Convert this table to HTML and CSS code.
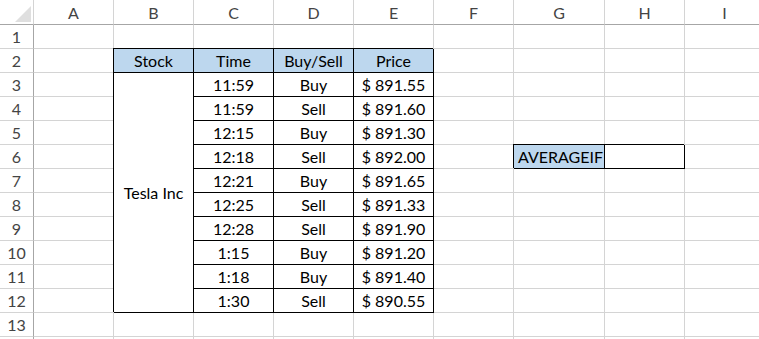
FILE: index.html
```html
<!DOCTYPE html>
<html>
<head>
<meta charset="utf-8">
<link rel="stylesheet" href="styles.css">
</head>
<body>
<div class="sheet">
  <div class="c corner"><span class="tri"></span></div>
  <div class="c hd">A</div><div class="c hd">B</div><div class="c hd">C</div><div class="c hd">D</div><div class="c hd">E</div><div class="c hd">F</div><div class="c hd">G</div><div class="c hd">H</div><div class="c hd">I</div>

  <div class="c rn">1</div>
  <div class="c"></div><div class="c"></div><div class="c"></div><div class="c"></div><div class="c"></div><div class="c"></div><div class="c"></div><div class="c"></div><div class="c"></div>

  <div class="c rn">2</div>
  <div class="c"></div>
  <div class="c t blue">Stock</div><div class="c t blue">Time</div><div class="c t blue">Buy/Sell</div><div class="c t blue">Price</div>
  <div class="c"></div><div class="c"></div><div class="c"></div><div class="c"></div>

  <div class="c rn">3</div>
  <div class="c"></div>
  <div class="c t merged">Tesla Inc</div>
  <div class="c t">11:59</div><div class="c t">Buy</div><div class="c t">$ 891.55</div>
  <div class="c"></div><div class="c"></div><div class="c"></div><div class="c"></div>

  <div class="c rn">4</div>
  <div class="c"></div>
  <div class="c t">11:59</div><div class="c t">Sell</div><div class="c t">$ 891.60</div>
  <div class="c"></div><div class="c"></div><div class="c"></div><div class="c"></div>

  <div class="c rn">5</div>
  <div class="c"></div>
  <div class="c t">12:15</div><div class="c t">Buy</div><div class="c t">$ 891.30</div>
  <div class="c"></div><div class="c"></div><div class="c"></div><div class="c"></div>

  <div class="c rn">6</div>
  <div class="c"></div>
  <div class="c t">12:18</div><div class="c t">Sell</div><div class="c t">$ 892.00</div>
  <div class="c"></div><div class="c t blue left">AVERAGEIF</div><div class="c t"></div><div class="c"></div>

  <div class="c rn">7</div>
  <div class="c"></div>
  <div class="c t">12:21</div><div class="c t">Buy</div><div class="c t">$ 891.65</div>
  <div class="c"></div><div class="c"></div><div class="c"></div><div class="c"></div>

  <div class="c rn">8</div>
  <div class="c"></div>
  <div class="c t">12:25</div><div class="c t">Sell</div><div class="c t">$ 891.33</div>
  <div class="c"></div><div class="c"></div><div class="c"></div><div class="c"></div>

  <div class="c rn">9</div>
  <div class="c"></div>
  <div class="c t">12:28</div><div class="c t">Sell</div><div class="c t">$ 891.90</div>
  <div class="c"></div><div class="c"></div><div class="c"></div><div class="c"></div>

  <div class="c rn">10</div>
  <div class="c"></div>
  <div class="c t">1:15</div><div class="c t">Buy</div><div class="c t">$ 891.20</div>
  <div class="c"></div><div class="c"></div><div class="c"></div><div class="c"></div>

  <div class="c rn">11</div>
  <div class="c"></div>
  <div class="c t">1:18</div><div class="c t">Buy</div><div class="c t">$ 891.40</div>
  <div class="c"></div><div class="c"></div><div class="c"></div><div class="c"></div>

  <div class="c rn">12</div>
  <div class="c"></div>
  <div class="c t">1:30</div><div class="c t">Sell</div><div class="c t">$ 890.55</div>
  <div class="c"></div><div class="c"></div><div class="c"></div><div class="c"></div>

  <div class="c rn">13</div>
  <div class="c"></div><div class="c"></div><div class="c"></div><div class="c"></div><div class="c"></div><div class="c"></div><div class="c"></div><div class="c"></div><div class="c"></div>

  <div class="c rn"></div>
  <div class="c"></div><div class="c"></div><div class="c"></div><div class="c"></div><div class="c"></div><div class="c"></div><div class="c"></div><div class="c"></div><div class="c"></div>
</div>
</body>
</html>
```
FILE: styles.css
```css
html, body {
  margin: 0;
  padding: 0;
  background: #ffffff;
}
body {
  width: 759px;
  height: 339px;
  overflow: hidden;
}
.sheet {
  display: grid;
  grid-template-columns: 34px repeat(6, 80px) 91px 80px 80px;
  grid-template-rows: 25px repeat(13, 24px) 3px;
  font-family: Lato, "Liberation Sans", sans-serif;
  font-size: 16px;
  color: #000;
}
.c {
  box-sizing: border-box;
  border-right: 1px solid #d4d4d4;
  border-bottom: 1px solid #d4d4d4;
  text-align: center;
  line-height: 23px;
  white-space: nowrap;
  overflow: hidden;
}
.hd {
  border-bottom-color: #a6a6a6;
  color: #444444;
  line-height: 23px;
  padding-top: 1px;
}
.rn {
  border-right-color: #a6a6a6;
  color: #444444;
}
.corner {
  border-bottom-color: #a6a6a6;
  display: flex;
  justify-content: flex-end;
  align-items: flex-end;
  padding: 0 2px 2px 0;
}
.tri {
  width: 16px;
  height: 16px;
  background: #dfdfdf;
  clip-path: polygon(100% 0, 100% 100%, 0 100%);
}
.t {
  border-right-color: #000;
  border-bottom-color: #000;
  box-shadow: -1px -1px 0 #000;
  position: relative;
  z-index: 1;
  overflow: visible;
}
.blue {
  background: #bdd7ee;
}
.left {
  text-align: left;
  padding-left: 4px;
}
.merged {
  grid-row: span 10;
  display: flex;
  align-items: center;
  justify-content: center;
}
```
